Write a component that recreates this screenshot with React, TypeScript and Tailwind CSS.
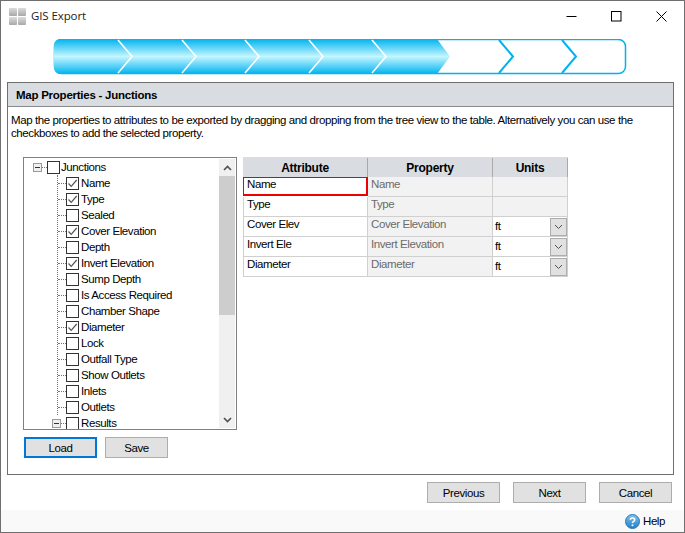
import React from "react";

const treeRows: [string, boolean][] = [
  ["Name", true], ["Type", true], ["Sealed", false], ["Cover Elevation", true], ["Depth", false],
  ["Invert Elevation", true], ["Sump Depth", false], ["Is Access Required", false], ["Chamber Shape", false],
  ["Diameter", true], ["Lock", false], ["Outfall Type", false], ["Show Outlets", false], ["Inlets", false], ["Outlets", false],
];

const tableRows = [
  ["Name", "Name", ""],
  ["Type", "Type", ""],
  ["Cover Elev", "Cover Elevation", "ft"],
  ["Invert Ele", "Invert Elevation", "ft"],
  ["Diameter", "Diameter", "ft"],
];

function Check({ on }: { on: boolean }) {
  return (
    <span className="w-[13px] h-[13px] border border-[#333333] bg-white shrink-0 flex items-center justify-center">
      {on && (
        <svg width="11" height="11" viewBox="0 0 11 11">
          <path d="M1.5 5.5 L4.2 8.4 L9.7 2" fill="none" stroke="#555555" strokeWidth="1.2" />
        </svg>
      )}
    </span>
  );
}

function Expander() {
  return (
    <span className="w-[9px] h-[9px] border border-[#9a9a9a] bg-[#f0f0f0] shrink-0 flex items-center justify-center">
      <span className="w-[5px] h-px bg-[#333333]" />
    </span>
  );
}

function Btn({ label, width, focus }: { label: string; width: string; focus?: boolean }) {
  return (
    <button className={`${width} h-[21px] pt-[2px] bg-[#e1e1e1] leading-none text-black flex items-center justify-center ${focus ? "border-2 border-[#0078d7]" : "border border-[#adadad]"}`}>
      {label}
    </button>
  );
}

function Progress() {
  const white = [118, 182, 245, 309, 372];
  const blue = [499, 562];
  return (
    <svg width="574" height="37" viewBox="0 0 574 37" className="block">
      <defs>
        <linearGradient id="g" x1="0" y1="0" x2="0" y2="1">
          <stop offset="0" stopColor="#00b3f0" />
          <stop offset="0.5" stopColor="#c4f6ff" />
          <stop offset="1" stopColor="#00b3f0" />
        </linearGradient>
      </defs>
      <g transform="translate(-53,-39)">
        <rect x="54.5" y="39.5" width="571" height="34" rx="7" fill="#ffffff" stroke="#00b3f0" strokeWidth="1.5" />
        <path d="M61 39 H437 L450 56.5 L437 74 H61 Q54 74 54 67 V46 Q54 39 61 39 Z" fill="url(#g)" />
        {white.map((x) => (
          <path key={x} d={`M${x} 40 L${x + 14} 56.5 L${x} 73`} fill="none" stroke="#ffffff" strokeWidth="1.6" />
        ))}
        {blue.map((x) => (
          <path key={x} d={`M${x} 40 L${x + 14} 56.5 L${x} 73`} fill="none" stroke="#00b3f0" strokeWidth="2" />
        ))}
      </g>
    </svg>
  );
}

export default function App() {
  return (
    <div className="w-[685px] h-[533px] bg-white border border-[#6f6f6f] flex flex-col overflow-hidden font-['Liberation_Sans',Arial,sans-serif] text-[11.5px] tracking-[-0.41px] text-black">
      {/* Title bar */}
      <div className="h-[30px] flex items-center pl-2 shrink-0">
        <svg width="17" height="17" viewBox="0 0 17 17" className="shrink-0">
          <defs>
            <linearGradient id="t" x1="0" y1="0" x2="0" y2="1">
              <stop offset="0" stopColor="#dcdcdc" />
              <stop offset="1" stopColor="#a8a8a8" />
            </linearGradient>
          </defs>
          <rect x="0" y="0" width="8" height="8" rx="1" fill="url(#t)" />
          <rect x="9" y="0" width="8" height="8" rx="1" fill="url(#t)" />
          <rect x="0" y="9" width="8" height="8" rx="1" fill="url(#t)" />
          <rect x="9" y="9" width="8" height="8" rx="1" fill="url(#t)" />
        </svg>
        <span className="ml-[5px] font-['Open_Sans',sans-serif] text-[11.5px] tracking-[-0.1px] text-[#222222]">GIS Export</span>
        <div className="ml-auto flex items-center pr-[17px] gap-[34px]">
          <svg width="11" height="11" viewBox="0 0 11 11"><path d="M0.5 5.5 H10.5" stroke="#000" /></svg>
          <svg width="11" height="11" viewBox="0 0 11 11"><rect x="0.5" y="0.5" width="9.5" height="9.5" fill="none" stroke="#000" /></svg>
          <svg width="11" height="11" viewBox="0 0 11 11"><path d="M0.5 0.5 L10.5 10.5 M10.5 0.5 L0.5 10.5" stroke="#000" /></svg>
        </div>
      </div>

      {/* Progress */}
      <div className="pl-[52px] pt-2 h-[51px] shrink-0">
        <Progress />
      </div>

      {/* Panel */}
      <div className="mx-[6px] w-[667px] h-[393px] border border-[#6f6f6f] shrink-0 flex flex-col">
        <div className="h-[24px] pt-[3px] bg-[#d9dde1] border-b border-[#8a8a8a] flex items-center pl-2 font-bold text-[11.5px] tracking-[-0.25px] shrink-0">
          Map Properties - Junctions
        </div>
        <p className="pl-[3px] pt-[7px] leading-[13px] w-[650px] h-[50px] shrink-0">
          Map the properties to attributes to be exported by dragging and dropping from the tree view to the table. Alternatively you can use the checkboxes to add the selected property.
        </p>
        <div className="flex items-start pl-[15px] gap-[6px]">
          {/* Tree */}
          <div className="flex flex-col gap-[7px]">
            <div className="w-[214px] h-[273px] border border-[#808080] flex overflow-hidden">
              <div className="flex-1 pt-[1px] overflow-hidden">
                <div className="h-[16px] flex items-center pl-[9px] relative">
                  <Expander />
                  <span className="w-[5px] border-t border-dotted border-[#777777]" />
                  <Check on={false} />
                  <span className="ml-px pt-[2px]">Junctions</span>
                </div>
                <div className="ml-[33px] border-l border-dotted border-[#777777]">
                  {treeRows.map(([label, on]) => (
                    <div key={label} className="h-[16px] flex items-center">
                      <span className="w-[8px] border-t border-dotted border-[#777777]" />
                      <Check on={on} />
                      <span className="ml-[2px] pt-[2px] whitespace-nowrap">{label}</span>
                    </div>
                  ))}
                </div>
                <div className="h-[16px] flex items-center pl-[28px]">
                  <Expander />
                  <span className="w-[5px] border-t border-dotted border-[#777777]" />
                  <Check on={false} />
                  <span className="ml-[2px] pt-[2px]">Results</span>
                </div>
              </div>
              <div className="w-[16px] mr-px my-px bg-[#f0f0f0] flex flex-col shrink-0">
                <div className="h-[17px] flex items-center justify-center shrink-0">
                  <svg width="9" height="6" viewBox="0 0 9 6"><path d="M1 5 L4.5 1.5 L8 5" fill="none" stroke="#505050" strokeWidth="1.6" /></svg>
                </div>
                <div className="h-[139px] bg-[#cdcdcd] shrink-0" />
                <div className="mt-auto h-[17px] flex items-center justify-center shrink-0">
                  <svg width="9" height="6" viewBox="0 0 9 6"><path d="M1 1 L4.5 4.5 L8 1" fill="none" stroke="#505050" strokeWidth="1.6" /></svg>
                </div>
              </div>
            </div>
            <div className="flex gap-2 pl-px">
              <Btn label="Load" width="w-[73px]" focus />
              <Btn label="Save" width="w-[63px]" />
            </div>
          </div>

          {/* Table */}
          <div className="w-[325px] flex flex-col">
            <div className="flex h-[20px] pt-px bg-[#d9dde1] font-bold text-[12px] tracking-[-0.25px]">
              <div className="w-[125px] border-r border-[#a9a9a9] flex items-center justify-center">Attribute</div>
              <div className="w-[125px] border-r border-[#a9a9a9] flex items-center justify-center">Property</div>
              <div className="w-[75px] border-r border-[#a9a9a9] flex items-center justify-center">Units</div>
            </div>
            {tableRows.map((r, i) => (
              <div key={i} className="flex h-[20px]">
                <div className={`w-[125px] ${i === 0 ? "border-l border-t border-r-2 border-b-2 border-[#ee0000] pl-[3px] h-[19px] leading-[12px]" : "border-l border-b border-r border-[#d0d0d0] pl-[3px] leading-[14px]"}`}>
                  {r[0]}
                </div>
                <div className="w-[125px] bg-[#f2f2f2] border-r border-b border-[#d0d0d0] pl-[3px] leading-[14px] text-[#6b6b6b]">
                  {r[1]}
                </div>
                <div className={`w-[75px] border-r border-b border-[#d0d0d0] flex ${r[2] ? "bg-white" : "bg-[#f2f2f2]"}`}>
                  {r[2] && (
                    <>
                      <span className="pl-[2px] pt-[2px] leading-[14px] flex-1">{r[2]}</span>
                      <span className="w-[17px] h-[18px] mt-px bg-[#e1e1e1] border border-[#adadad] flex items-center justify-center shrink-0">
                        <svg width="9" height="6" viewBox="0 0 9 6"><path d="M1 1 L4.5 4.5 L8 1" fill="none" stroke="#505050" /></svg>
                      </span>
                    </>
                  )}
                </div>
              </div>
            ))}
          </div>
        </div>
      </div>

      {/* Footer buttons */}
      <div className="h-[35px] flex justify-end items-start pt-[7px] pr-3 gap-[13px] shrink-0">
        <Btn label="Previous" width="w-[73px]" />
        <Btn label="Next" width="w-[73px]" />
        <Btn label="Cancel" width="w-[73px]" />
      </div>

      {/* Help strip */}
      <div className="flex-1 bg-[#f9f9f9] flex items-center justify-end pr-[19px] gap-[3px]">
        <svg width="15" height="15" viewBox="0 0 15 15">
          <defs>
            <linearGradient id="h" x1="0" y1="0" x2="0" y2="1">
              <stop offset="0" stopColor="#7cc4f0" />
              <stop offset="1" stopColor="#1f7fc8" />
            </linearGradient>
          </defs>
          <circle cx="7.5" cy="7.5" r="7" fill="url(#h)" stroke="#2a7ab8" />
          <path d="M5.3 5.8 C5.3 3.4 9.7 3.4 9.7 5.8 C9.7 7.4 7.5 7.2 7.5 9" fill="none" stroke="#fff" strokeWidth="1.6" />
          <circle cx="7.5" cy="11.2" r="1" fill="#fff" />
        </svg>
        <span className="pt-px">Help</span>
      </div>
    </div>
  );
}
